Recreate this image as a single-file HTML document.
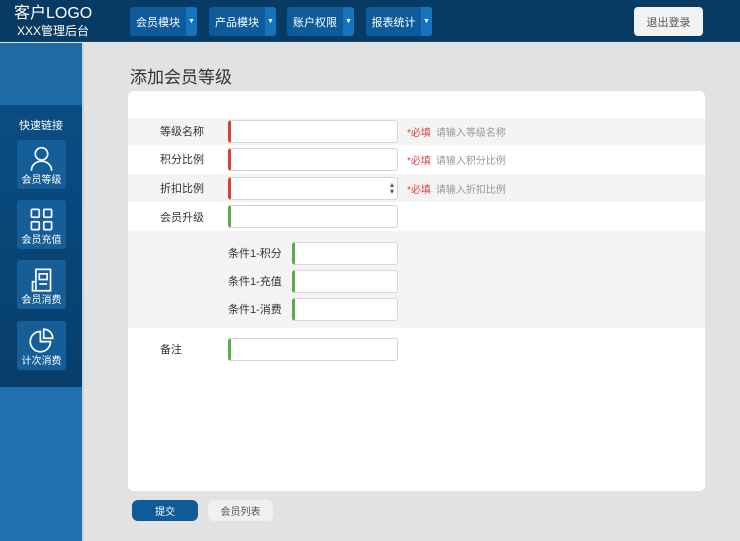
<!DOCTYPE html>
<html><head><meta charset="utf-8"><style>
*{margin:0;padding:0;box-sizing:border-box}
body{width:740px;height:541px;overflow:hidden;position:relative;background:#e2e2e2;font-family:"Liberation Sans","Noto Sans CJK SC",sans-serif;font-size:12px;color:#333}
.hd{position:absolute;left:0;top:0;width:740px;height:42px;background:#073b64;border-bottom:1px solid #0a4a7a}
.logo{position:absolute;left:14px;top:5px;color:#fff;font-size:16px;line-height:18px}
.logo2{position:absolute;left:17px;top:23px;color:#fff;font-size:12px;line-height:16px}
.nav{position:absolute;top:7px;height:29px;border-radius:3px;background:#0d5b9b;color:#fff;font-size:11px;line-height:33px;overflow:hidden}
.nav span{position:absolute;left:0;top:0;height:29px;text-align:center}
.nav i{position:absolute;right:0;top:0;width:11px;height:29px;background:#1673bd;font-style:normal;font-size:7px;text-align:center;line-height:29px}
.out{position:absolute;left:634px;top:7px;width:69px;height:29px;border-radius:4px;background:#f2f2f2;color:#555;font-size:11px;line-height:33px;text-align:center}
.sb1{position:absolute;left:0;top:43px;width:82px;height:62px;background:#1e6aa6}
.sb2{position:absolute;left:0;top:105px;width:82px;height:282px;background:linear-gradient(#0a4d82,#073e6a)}
.sb3{position:absolute;left:0;top:387px;width:82px;height:154px;background:#2071ae}
.sbl{position:absolute;left:82px;top:43px;width:2px;height:498px;background:#cfd3d6}
.ql{position:absolute;left:0;top:117px;width:82px;text-align:center;color:#fff;font-size:11px}
.tile{position:absolute;left:17px;width:49px;height:49px;background:#155e97;border-radius:3px;color:#fff;font-size:10px;text-align:center}
.tile svg{position:absolute;left:12px;top:6px}
.tile b{position:absolute;left:0;width:49px;top:35px;font-weight:normal;line-height:12px}
h1{position:absolute;left:130px;top:63px;font-size:17px;font-weight:normal;color:#333}
.panel{position:absolute;left:128px;top:91px;width:577px;height:400px;background:#fff;border-radius:6px;overflow:hidden}
.band{position:absolute;left:0;width:577px;background:#f4f4f4}
.lab{position:absolute;font-size:11px;color:#333;line-height:14px}
.inp{position:absolute;height:23px;background:#fff;border:1px solid #d6d6d6;border-left:3px solid #d9403a;border-radius:3px}
.g{border-left-color:#5cad4a}
.req{position:absolute;left:279px;font-size:10px;line-height:14px;color:#e04040}
.req em{font-style:normal;color:#999;margin-left:5px}
.btn{position:absolute;top:500px;height:21px;border-radius:6px;font-size:10px;line-height:25px;text-align:center}
</style></head><body>
<div class="hd">
<div class="logo">客户LOGO</div><div class="logo2">XXX管理后台</div>
<div class="nav" style="left:130px;width:67px"><span style="width:56px">会员模块</span><i>▼</i></div>
<div class="nav" style="left:209px;width:67px"><span style="width:56px">产品模块</span><i>▼</i></div>
<div class="nav" style="left:287px;width:67px"><span style="width:56px">账户权限</span><i>▼</i></div>
<div class="nav" style="left:366px;width:66px"><span style="width:55px">报表统计</span><i>▼</i></div>
<div class="out">退出登录</div>
</div>
<div class="sb1"></div><div class="sb2"></div><div class="sb3"></div><div class="sbl"></div>
<div class="ql">快速链接</div>
<div class="tile" style="top:140px"><svg width="25" height="27" viewBox="0 0 22 24" fill="none" stroke="#fff" stroke-width="1.5"><circle cx="11" cy="7" r="5.5"/><path d="M2 22c0-5 4-8.5 9-8.5s9 3.5 9 8.5"/></svg><b>会员等级</b></div>
<div class="tile" style="top:200px"><svg width="25" height="27" viewBox="0 0 22 24" fill="none" stroke="#fff" stroke-width="1.5"><rect x="2" y="3" width="7" height="7" rx="1"/><rect x="13" y="3" width="7" height="7" rx="1"/><rect x="2" y="14" width="7" height="7" rx="1"/><rect x="13" y="14" width="7" height="7" rx="1"/></svg><b>会员充值</b></div>
<div class="tile" style="top:260px"><svg width="25" height="27" viewBox="0 0 22 24" fill="none" stroke="#fff" stroke-width="1.5"><path d="M6 3h13v19H3v-8h3z"/><path d="M6 14v8"/><rect x="9" y="7" width="7" height="5"/><path d="M9 16h7"/></svg><b>会员消费</b></div>
<div class="tile" style="top:321px"><svg width="25" height="27" viewBox="0 0 22 24" fill="none" stroke="#fff" stroke-width="1.5"><path d="M10 4a9 9 0 1 0 9 9h-9z"/><path d="M13 2v8h8a8 8 0 0 0-8-8z"/></svg><b>计次消费</b></div>
<h1>添加会员等级</h1>
<div class="panel">
<div class="band" style="top:27px;height:27px"></div>
<div class="band" style="top:83px;height:28px"></div>
<div class="band" style="top:140px;height:97px"></div>
<div class="lab" style="left:32px;top:34px">等级名称</div>
<div class="inp" style="left:100px;top:29px;width:170px"></div>
<div class="req" style="top:36px">*必填<em>请输入等级名称</em></div>
<div class="lab" style="left:32px;top:62px">积分比例</div>
<div class="inp" style="left:100px;top:57px;width:170px"></div>
<div class="req" style="top:64px">*必填<em>请输入积分比例</em></div>
<div class="lab" style="left:32px;top:91px">折扣比例</div>
<div class="inp" style="left:100px;top:86px;width:170px"><span style="position:absolute;right:3px;top:3px;font-size:8px;line-height:7px;color:#555">▴<br>▾</span></div>
<div class="req" style="top:93px">*必填<em>请输入折扣比例</em></div>
<div class="lab" style="left:32px;top:120px">会员升级</div>
<div class="inp g" style="left:100px;top:114px;width:170px"></div>
<div class="lab" style="left:100px;top:156px">条件1-积分</div>
<div class="inp g" style="left:164px;top:151px;width:106px"></div>
<div class="lab" style="left:100px;top:184px">条件1-充值</div>
<div class="inp g" style="left:164px;top:179px;width:106px"></div>
<div class="lab" style="left:100px;top:212px">条件1-消费</div>
<div class="inp g" style="left:164px;top:207px;width:106px"></div>
<div class="lab" style="left:32px;top:252px">备注</div>
<div class="inp g" style="left:100px;top:247px;width:170px"></div>
</div>
<div class="btn" style="left:132px;width:66px;background:#0f5b98;color:#fff">提交</div>
<div class="btn" style="left:208px;width:65px;background:#f0f0f0;color:#555">会员列表</div>
</body></html>
